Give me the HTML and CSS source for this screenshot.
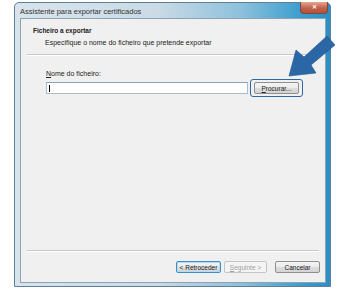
FILE: index.html
```html
<!DOCTYPE html>
<html lang="pt">
<head>
    <meta charset="UTF-8">
    <title>Assistente para exportar certificados</title>
    <link rel="stylesheet" href="styles.css">
</head>
<body>
    <div class="window">
        <div class="titlebar">
            <span class="title">Assistente para exportar certificados</span>
            <span class="close">&#x2715;</span>
        </div>
        <div class="client">
            <div class="header">
                <div class="header-title">Ficheiro a exportar</div>
                <div class="header-sub">Especifique o nome do ficheiro que pretende exportar</div>
            </div>
            <div class="rule"></div>

            <div class="main">
                <label class="field-label"><u>N</u>ome do ficheiro:</label>
                <div class="field-row">
                    <div class="text-input"><span class="caret"></span></div>
                    <div class="focus-ring">
                        <button class="btn"><u>P</u>rocurar...</button>
                    </div>
                </div>
            </div>

            <div class="rule rule-bottom"></div>
            <div class="footer">
                <button class="btn btn-default">&lt; Retroceder</button>
                <button class="btn btn-disabled"><u>S</u>eguinte &gt;</button>
                <button class="btn btn-cancel">Cancelar</button>
            </div>
        </div>
    </div>

    <!-- pointer arrow over the dialog -->
    <svg class="arrow" width="347" height="290" viewBox="0 0 347 290">
        <polygon points="289,76 296,50 304,57 327,36 335,45 311,65 316,73" fill="#2b67a5" stroke="#1f5590" stroke-width="0.6"/>
    </svg>
</body>
</html>
```

FILE: styles.css
```css
body {
    margin: 0;
    background: #fff;
    font-family: "Liberation Sans", Arial, sans-serif;
    font-size: 7px;
    color: #222;
    position: relative;
    width: 347px;
    height: 290px;
    overflow: hidden;
}

.window {
    margin: 2px 0 0 14px;
    width: 317px;
    height: 285px;
    box-sizing: border-box;
    border: 1px solid #5f7f98;
    border-radius: 5px 5px 0 0;
    background: linear-gradient(90deg, #d8e4ec 0%, #cadbe6 45%, #8cc0dc 72%, #3e9fcf 90%, #2b8fc4 100%);
    padding: 0 4px 3px 5px;
    display: flex;
    flex-direction: column;
}

.titlebar {
    height: 15px;
    display: flex;
    align-items: flex-start;
    justify-content: space-between;
}

.title {
    margin-top: 4px;
    font-size: 7.5px;
    color: #333;
}

.close {
    width: 26px;
    height: 11px;
    margin: -1px -2px 0 0;
    border: 1px solid #7a4a40;
    border-top: none;
    border-radius: 0 0 4px 4px;
    background: linear-gradient(#e2a792, #c2614a 55%, #b6503a);
    color: #fff;
    font-size: 6px;
    font-weight: bold;
    text-align: center;
    line-height: 10px;
}

.client {
    flex: 1;
    background: #f0f0f0;
    border: 1px solid #8da3b4;
    display: flex;
    flex-direction: column;
}

.header {
    height: 35px;
    padding: 8px 0 0 12px;
    box-sizing: border-box;
}

.header-title {
    font-weight: bold;
    font-size: 6.5px;
}

.header-sub {
    margin-top: 5px;
    padding-left: 12px;
    font-size: 7px;
}

.rule {
    height: 1px;
    margin: 0 6px;
    background: #c8c8c8;
    border-bottom: 1px solid #fff;
}

.main {
    flex: 1;
    padding: 14px 0 0 25px;
}

.field-label {
    display: block;
    font-size: 7px;
    margin-bottom: 1px;
}

.field-row {
    display: flex;
    align-items: center;
}

.text-input {
    width: 202px;
    height: 12px;
    box-sizing: border-box;
    background: #fff;
    border: 1px solid #a9bccb;
    border-top-color: #8aa6bd;
    padding: 2px 2px;
}

.caret {
    display: block;
    width: 1px;
    height: 7px;
    background: #000;
}

.focus-ring {
    margin: 1px 0 0 2px;
    padding: 2px 3px;
    border: 1.5px solid #2b67a5;
    border-radius: 3px;
}

.btn {
    font-family: "Liberation Sans", Arial, sans-serif;
    font-size: 6.5px;
    color: #222;
    height: 12px;
    width: 45px;
    padding: 0;
    border: 1px solid #8f8f8f;
    border-radius: 2px;
    background: linear-gradient(#f4f4f4, #ebebeb 50%, #dcdcdc 51%, #d4d4d4);
}

.footer {
    height: 30px;
    display: flex;
    align-items: center;
    justify-content: flex-end;
    padding-right: 5px;
    gap: 3px;
}

.btn-default {
    border-color: #3c8fc6;
    box-shadow: inset 0 0 0 1px #b5dcf3;
}

.btn-disabled {
    width: 43px;
    color: #a0a0a0;
    border-color: #c6c6c6;
    background: #f4f4f4;
}

.btn-cancel {
    margin-left: 5px;
}

.arrow {
    position: absolute;
    left: 0;
    top: 0;
    pointer-events: none;
}
```
